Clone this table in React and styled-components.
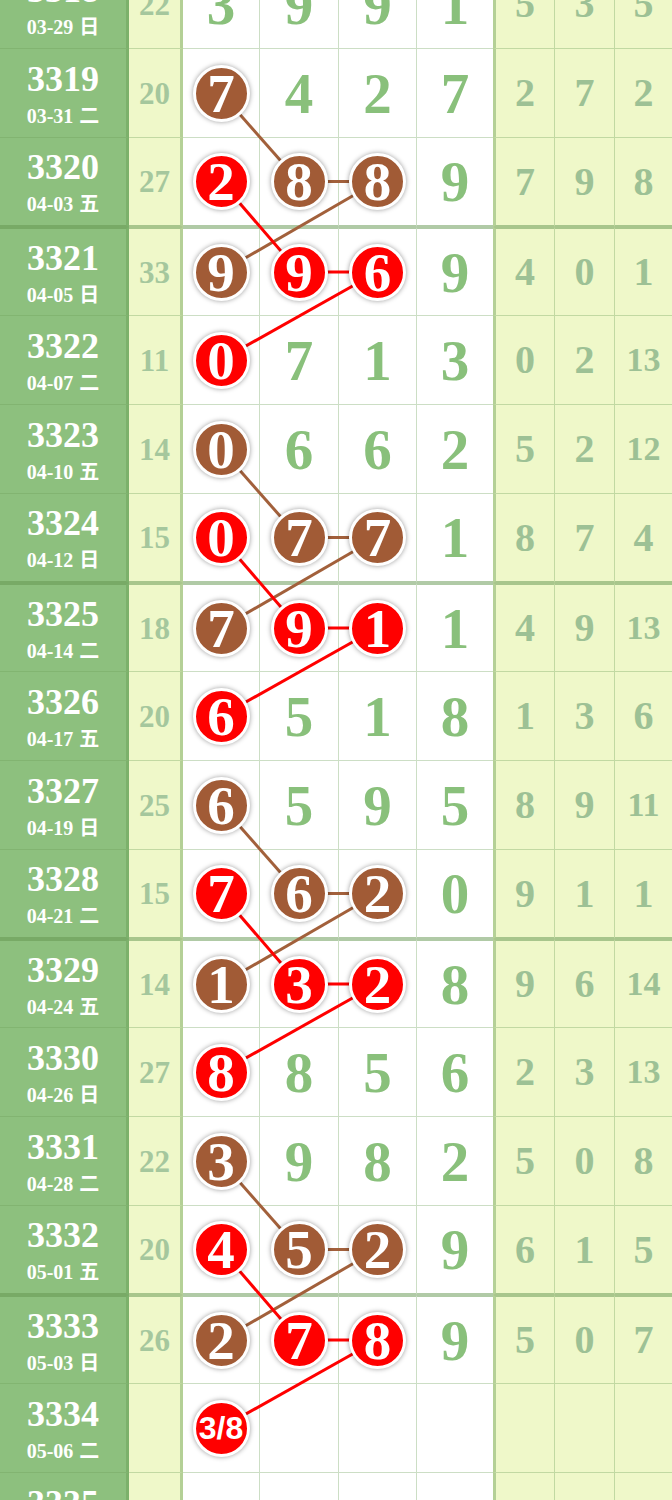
import React from 'react';
import styled, { createGlobalStyle } from 'styled-components';

const Global = createGlobalStyle`
  html, body { margin: 0; padding: 0; background: #ffffff; }
  body { width: 672px; overflow: hidden; }
`;

const ROW_H = 89;
const TOP_OFFSET = -40;
const MAIN_START = 183;
const MAIN_W = [77, 79, 78, 76];
const RIGHT_W = [61, 60, 58];

const SERIF = `"Liberation Serif", "Times New Roman", serif`;
const CJK = `"Noto Sans CJK SC", "Noto Sans", sans-serif`;
const LINE = 'rgba(110, 160, 90, 0.35)';
const THICK = 'rgba(100, 150, 80, 0.5)';

const RAW = [
  ['3318', '03-29', '日', '22', '3 9 9 1', '5 3 5'],
  ['3319', '03-31', '二', '20', '7b 4 2 7', '2 7 2'],
  ['3320', '04-03', '五', '27', '2r 8b 8b 9', '7 9 8'],
  ['3321', '04-05', '日', '33', '9b 9r 6r 9', '4 0 1'],
  ['3322', '04-07', '二', '11', '0r 7 1 3', '0 2 13'],
  ['3323', '04-10', '五', '14', '0b 6 6 2', '5 2 12'],
  ['3324', '04-12', '日', '15', '0r 7b 7b 1', '8 7 4'],
  ['3325', '04-14', '二', '18', '7b 9r 1r 1', '4 9 13'],
  ['3326', '04-17', '五', '20', '6r 5 1 8', '1 3 6'],
  ['3327', '04-19', '日', '25', '6b 5 9 5', '8 9 11'],
  ['3328', '04-21', '二', '15', '7r 6b 2b 0', '9 1 1'],
  ['3329', '04-24', '五', '14', '1b 3r 2r 8', '9 6 14'],
  ['3330', '04-26', '日', '27', '8r 8 5 6', '2 3 13'],
  ['3331', '04-28', '二', '22', '3b 9 8 2', '5 0 8'],
  ['3332', '05-01', '五', '20', '4r 5b 2b 9', '6 1 5'],
  ['3333', '05-03', '日', '26', '2b 7r 8r 9', '5 0 7'],
  ['3334', '05-06', '二', '', '3/8r - - -', '- - -'],
  ['3335', '05-08', '五', '', '- - - -', '- - -'],
];

const ROWS = RAW.map(([no, date, wd, sum, main, right]) => {
  const n = Number(no);
  return {
    no,
    date,
    wd,
    sum,
    thickBottom: (n - 3320) % 4 === 0,
    thickTop: (n - 3321) % 4 === 0,
    main: main.split(' ').map((t) => {
      if (t === '-') return { v: '', ball: null };
      const last = t[t.length - 1];
      if (last === 'b' || last === 'r') return { v: t.slice(0, -1), ball: last };
      return { v: t, ball: null };
    }),
    right: right.split(' ').map((t) => (t === '-' ? '' : t)),
  };
});

const colCenter = (c) => {
  let x = MAIN_START;
  for (let k = 0; k < c; k++) x += MAIN_W[k];
  const inner = c < 3 ? MAIN_W[c] - 1 : MAIN_W[c];
  return x + inner / 2;
};
const rowCenter = (i) => {
  const r = ROWS[i];
  const bt = r.thickTop ? 2 : 0;
  const bb = r.thickBottom ? 2 : 1;
  return ROW_H * i + bt + (ROW_H - bt - bb) / 2;
};

const BALLS = [];
ROWS.forEach((r, i) => r.main.forEach((m, c) => { if (m.ball) BALLS.push({ i, c, color: m.ball }); }));
const SEGMENTS = [];
['b', 'r'].forEach((color) => {
  const list = BALLS.filter((b) => b.color === color);
  for (let k = 1; k < list.length; k++) {
    const a = list[k - 1];
    const b = list[k];
    if (b.i - a.i <= 1) {
      SEGMENTS.push({ x1: colCenter(a.c), y1: rowCenter(a.i), x2: colCenter(b.c), y2: rowCenter(b.i), color });
    }
  }
});

const Viewport = styled.div`
  width: 672px;
  height: 1500px;
  overflow: hidden;
`;

const Chart = styled.div`
  position: relative;
  z-index: 0;
  width: 672px;
  margin-top: ${TOP_OFFSET}px;
`;

const Row = styled.div`
  display: flex;
  height: ${ROW_H}px;
  --bb: ${(p) => (p.$thickBottom ? '2px' : '1px')};
  --bt: ${(p) => (p.$thickTop ? '2px' : '0px')};
  --bc: ${(p) => (p.$thickBottom ? THICK : LINE)};
`;

const CellBase = styled.div`
  box-sizing: border-box;
  height: 100%;
  flex: none;
  display: flex;
  align-items: center;
  justify-content: center;
  border-bottom: var(--bb) solid var(--bc);
  border-top: var(--bt) solid ${THICK};
  font-family: ${SERIF};
  font-weight: 700;
`;

const DateCell = styled(CellBase)`
  width: 129px;
  flex-direction: column;
  background: #8dc07e;
  border-right: 3px solid rgba(80, 140, 60, 0.28);
  color: #ffffff;
`;

const IssueNo = styled.div`
  font-size: 36px;
  line-height: 36px;
  margin-top: 2px;
`;

const DateLine = styled.div`
  font-size: 20px;
  line-height: 24px;
  margin-top: 6px;
  white-space: nowrap;
`;

const WeekDay = styled.span`
  font-family: ${CJK};
  font-weight: 700;
  font-size: 20px;
  margin-left: 6px;
`;

const SumCell = styled(CellBase)`
  width: 54px;
  background: #eff8c9;
  border-right: 3px solid rgba(110, 160, 90, 0.45);
  color: #a5c79d;
  font-size: 31px;
  line-height: 1;
`;

const MainCell = styled(CellBase)`
  width: ${(p) => p.$w}px;
  background: #ffffff;
  border-right: ${(p) => (p.$last ? '0' : `1px solid ${LINE}`)};
  color: #89c07b;
  font-size: 57px;
  line-height: 1;
`;

const RightCell = styled(CellBase)`
  width: ${(p) => p.$w}px;
  background: #eff8c9;
  border-left: ${(p) => (p.$first ? '3px solid rgba(110, 160, 90, 0.45)' : `1px solid ${LINE}`)};
  color: #9dc195;
  font-size: ${(p) => (p.$double ? 34 : 40)}px;
  line-height: 1;
`;

const Ball = styled.div`
  position: relative;
  z-index: 2;
  box-sizing: border-box;
  width: 57px;
  height: 57px;
  border-radius: 50%;
  border: 3px solid #ffffff;
  box-shadow: 0 0 5px rgba(0, 0, 0, 0.4);
  background: ${(p) => (p.$color === 'r' ? '#ff0000' : '#a15b36')};
  color: #ffffff;
  display: flex;
  align-items: center;
  justify-content: center;
  font-family: ${(p) => (p.$small ? `"Liberation Sans", Arial, sans-serif` : SERIF)};
  font-weight: 700;
  font-size: ${(p) => (p.$small ? 32 : 55)}px;
  line-height: 1;
`;

const Lines = styled.svg`
  position: absolute;
  left: 0;
  top: 0;
  z-index: 1;
  pointer-events: none;
`;

export default function App() {
  const height = ROWS.length * ROW_H;
  return (
    <Viewport>
      <Global />
      <Chart>
        {ROWS.map((r) => (
          <Row key={r.no} $thickBottom={r.thickBottom} $thickTop={r.thickTop}>
            <DateCell>
              <IssueNo>{r.no}</IssueNo>
              <DateLine>
                {r.date}
                <WeekDay>{r.wd}</WeekDay>
              </DateLine>
            </DateCell>
            <SumCell>{r.sum}</SumCell>
            {r.main.map((m, c) => (
              <MainCell key={c} $w={MAIN_W[c]} $last={c === 3}>
                {m.ball ? (
                  <Ball $color={m.ball} $small={m.v.length > 1}>{m.v}</Ball>
                ) : (
                  m.v
                )}
              </MainCell>
            ))}
            {r.right.map((v, c) => (
              <RightCell key={c} $w={RIGHT_W[c]} $first={c === 0} $double={v.length > 1}>
                {v}
              </RightCell>
            ))}
          </Row>
        ))}
        <Lines width="672" height={height} viewBox={`0 0 672 ${height}`}>
          {SEGMENTS.map((s, k) => (
            <line
              key={k}
              x1={s.x1}
              y1={s.y1}
              x2={s.x2}
              y2={s.y2}
              stroke={s.color === 'r' ? '#ff0000' : '#a2603b'}
              strokeWidth="3"
            />
          ))}
        </Lines>
      </Chart>
    </Viewport>
  );
}
